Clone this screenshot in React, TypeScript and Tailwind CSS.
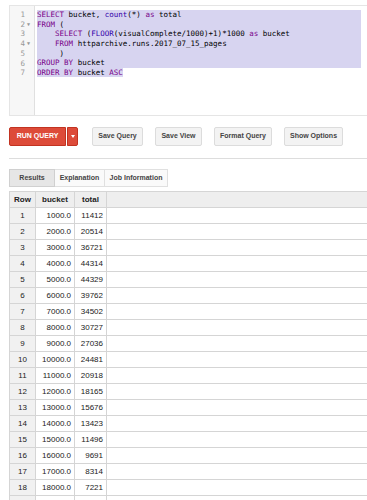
const kw = "text-[#770088]";
const fn = "text-[#3300aa]";

const rows: [number, string, string][] = [
  [1, "1000.0", "11412"],
  [2, "2000.0", "20514"],
  [3, "3000.0", "36721"],
  [4, "4000.0", "44314"],
  [5, "5000.0", "44329"],
  [6, "6000.0", "39762"],
  [7, "7000.0", "34502"],
  [8, "8000.0", "30727"],
  [9, "9000.0", "27036"],
  [10, "10000.0", "24481"],
  [11, "11000.0", "20918"],
  [12, "12000.0", "18165"],
  [13, "13000.0", "15676"],
  [14, "14000.0", "13423"],
  [15, "15000.0", "11496"],
  [16, "16000.0", "9691"],
  [17, "17000.0", "8314"],
  [18, "18000.0", "7221"],
];

function Editor() {
  const gutter = ["1", "2", "3", "4", "5", "6", "7"];
  const folds = [false, true, false, true, false, false, false];
  return (
    <div className="flex h-[111px] border-t border-b border-l border-[#e5e5e5] bg-white">
      <div className="w-[25px] shrink-0 bg-[#f7f7f7] border-r border-[#e0e0e0] pt-[4px] text-[#999]">
        {gutter.map((g, i) => (
          <div key={g} className="flex h-[9.7px] items-center justify-end pr-[2px] leading-none">
            <span>{g}</span>
            <span className="w-[7px] text-center text-[5px]">{folds[i] ? "▼" : ""}</span>
          </div>
        ))}
      </div>
      <div className="flex-1 pt-[4px] pl-[2px] whitespace-pre text-black">
        <div className="w-[324px] bg-[#d7d4f0]">
          <div className="h-[9.7px] leading-[9.7px]">
            <span className={kw}>SELECT</span> bucket, <span className={fn}>count</span>(*) <span className={kw}>as</span> total
          </div>
          <div className="h-[9.7px] leading-[9.7px]">
            <span className={kw}>FROM</span> (
          </div>
          <div className="h-[9.7px] leading-[9.7px]">
            {"    "}<span className={kw}>SELECT</span> (<span className={fn}>FLOOR</span>(visualComplete/1000)+1)*1000 <span className={kw}>as</span> bucket
          </div>
          <div className="h-[9.7px] leading-[9.7px]">
            {"    "}<span className={kw}>FROM</span> httparchive.runs.2017_07_15_pages
          </div>
          <div className="h-[9.7px] leading-[9.7px]">{"     )"}</div>
          <div className="h-[9.7px] leading-[9.7px]">
            <span className={kw}>GROUP</span> <span className={kw}>BY</span> bucket
          </div>
        </div>
        <div className="h-[9.7px] leading-[9.7px]">
          <span className="bg-[#d7d4f0]">
            <span className={kw}>ORDER</span> <span className={kw}>BY</span> bucket <span className={kw}>ASC</span>
          </span>
        </div>
      </div>
    </div>
  );
}

function Btn({ label, w }: { label: string; w: string }) {
  return (
    <button
      className={`${w} h-[19px] rounded-[2px] border border-[#dcdcdc] bg-[#f3f3f3] text-[7px] font-bold text-[#444]`}
    >
      {label}
    </button>
  );
}

export default function App() {
  return (
    <div
      className="w-[367px] h-[500px] overflow-hidden bg-white pl-[9px] pt-[5px] text-[8px]"
      style={{ fontFamily: "'Liberation Sans', Arial, sans-serif" }}
    >
      <div className="text-[7.5px]" style={{ fontFamily: "'DejaVu Sans Mono', monospace" }}>
        <Editor />
      </div>

      <div className="mt-[11px] flex items-center">
        <div className="flex h-[19px]">
          <button className="w-[57px] h-[19px] rounded-l-[2px] bg-[#dd4b39] text-[7px] font-bold text-white border border-[#c23321]">
            RUN QUERY
          </button>
          <button className="ml-px w-[11px] h-[19px] rounded-r-[2px] bg-[#dd4b39] border border-[#c23321] flex items-center justify-center">
            <span className="block w-0 h-0 border-l-[2.5px] border-r-[2.5px] border-t-[3px] border-l-transparent border-r-transparent border-t-white" />
          </button>
        </div>
        <div className="ml-[14px] flex gap-[12px]">
          <Btn label="Save Query" w="w-[51px]" />
          <Btn label="Save View" w="w-[47px]" />
          <Btn label="Format Query" w="w-[58px]" />
          <Btn label="Show Options" w="w-[59px]" />
        </div>
      </div>

      <div className="mt-[12px] h-px bg-[#dddddd]" />

      <div className="mt-[10px] flex h-[18px] text-[7px] font-bold text-[#444]">
        <div className="w-[46px] flex items-center justify-center border border-[#d0d0d0] bg-[#e6e6e6]">Results</div>
        <div className="w-[50px] flex items-center justify-center border-y border-r border-[#e0e0e0] bg-[#fafafa]">Explanation</div>
        <div className="w-[63px] flex items-center justify-center border-y border-r border-[#e0e0e0] bg-[#fafafa]">Job Information</div>
      </div>

      <table className="mt-[4px] w-[358px] border-collapse text-[#222]">
        <thead>
          <tr className="h-[16px] bg-[#eeeeee] font-bold text-[8px]">
            <th className="w-[26px] border border-[#d5d5d5] font-bold">Row</th>
            <th className="w-[39px] border border-[#d5d5d5] font-bold">bucket</th>
            <th className="w-[32px] border border-[#d5d5d5] font-bold">total</th>
            <th className="border-y border-[#d5d5d5]"></th>
          </tr>
        </thead>
        <tbody>
          {rows.map(([r, b, t]) => (
            <tr key={r} className="h-[16px]">
              <td className="border border-[#d5d5d5] bg-[#f1f1f1] text-center">{r}</td>
              <td className="border border-[#d5d5d5] text-right pr-[3px]">{b}</td>
              <td className="border border-[#d5d5d5] text-right pr-[3px]">{t}</td>
              <td className="border-y border-[#d5d5d5]"></td>
            </tr>
          ))}
          <tr className="h-[16px]">
            <td className="border border-[#d5d5d5] bg-[#f1f1f1]"></td>
            <td className="border border-[#d5d5d5]"></td>
            <td className="border border-[#d5d5d5]"></td>
            <td className="border-y border-[#d5d5d5]"></td>
          </tr>
        </tbody>
      </table>
    </div>
  );
}
